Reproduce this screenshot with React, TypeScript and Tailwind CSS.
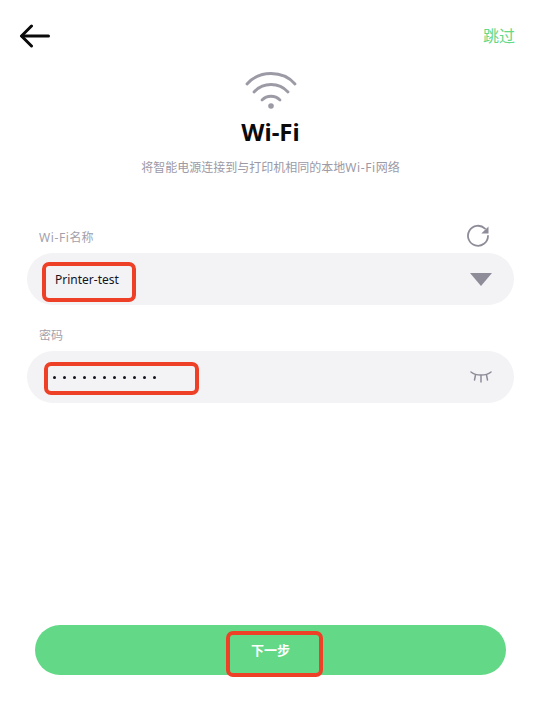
import React from 'react';

const FONT = "font-['Noto_Sans','Noto_Sans_CJK_SC',sans-serif]";

// red marker boxes drawn on top of the screenshot
const Mark = ({ className }: { className: string }) => (
    <div className={`absolute border-[4px] border-[#ee4027] rounded-[7px] ${className}`} />
);

function BackArrow() {
    return (
        <svg width="32" height="24" viewBox="0 0 32 24" fill="none" stroke="#0a0a0a" strokeWidth="3" strokeLinecap="round" strokeLinejoin="round">
            <path d="M29.5 12H3" />
            <path d="M12.5 2 2.5 12l10 10" />
        </svg>
    );
}

function WifiIcon() {
    return (
        <svg width="52" height="38" viewBox="0 0 52 38" fill="none" stroke="#9c9aa5" strokeWidth="2.8" strokeLinecap="round">
            <path d="M2 13C14-1 38-1 50 13" />
            <path d="M9 21C18 11 34 11 43 21" />
            <path d="M17 29C22 24 30 24 35 29" />
            <circle cx="26" cy="35" r="2.8" fill="#9c9aa5" stroke="none" />
        </svg>
    );
}

function RefreshIcon() {
    return (
        <svg width="24" height="24" viewBox="0 0 24 24" fill="none">
            <path d="M19 4.6A10 10 0 1 0 22 12" stroke="#8e8c98" strokeWidth="1.8" strokeLinecap="round" />
            <path d="M22.5 2.5V9.6h-7.2z" fill="#8e8c98" />
        </svg>
    );
}

function EyeClosed() {
    return (
        <svg width="22" height="14" viewBox="0 0 22 14" fill="none" stroke="#8e8c98" strokeWidth="1.5" strokeLinecap="round">
            <path d="M1 2C6 6 16 6 21 2" />
            <path d="M11 5.5V12" />
            <path d="M5.5 4.8 4.5 10" />
            <path d="M16.5 4.8 17.5 10" />
        </svg>
    );
}

export default function App() {
    return (
        <div className={`${FONT} w-[541px] h-[703px] bg-white flex flex-col overflow-hidden`}>
            <div className="flex items-start justify-between pl-[19px] pr-[26px] pt-[24px]">
                <BackArrow />
                <span className="mt-[1px] text-[16px] leading-[22px] text-[#63d886]">跳过</span>
            </div>

            <div className="flex flex-col items-center mt-[23px]">
                <WifiIcon />
                <h1 className="mt-[6px] text-[24px] leading-[34px] font-bold text-[#0a0a0a]">Wi-Fi</h1>
                <p className="mt-[10px] text-[12px] leading-[18px] text-[#9c9aa5]">
                    将智能电源连接到与打印机相同的本地<span className="tracking-[0.6px]">Wi-Fi</span>网络
                </p>
            </div>

            <div className="mt-[47px] px-[27px]">
                <div className="flex items-center justify-between h-[24px] pl-[12px] pr-[24px]">
                    <span className="mt-[4px] text-[12px] text-[#a3a1ab]">
                        <span className="tracking-[0.6px]">Wi-Fi</span>名称
                    </span>
                    <RefreshIcon />
                </div>
                <div className="relative mt-[5px] h-[52px] rounded-full bg-[#f3f3f5] flex items-center justify-between pl-[28px] pr-[22px]">
                    <span className="mt-[2px] text-[12px] text-[#14141f]">Printer-test</span>
                    <div className="w-0 h-0 border-x-[11px] border-x-transparent border-t-[13px] border-t-[#8e8c98]" />
                    <Mark className="left-[15px] top-[9px] w-[94px] h-[40px]" />
                </div>

                <div className="mt-[21px] h-[20px] pl-[12px] flex items-center">
                    <span className="text-[12px] text-[#a3a1ab]">密码</span>
                </div>
                <div className="relative mt-[5px] h-[52px] rounded-full bg-[#f3f3f5] flex items-center justify-between pl-[26px] pr-[22px]">
                    <div className="flex gap-[7px]">
                        {Array.from({ length: 11 }).map((_, i) => (
                            <span key={i} className="w-[3px] h-[3px] rounded-full bg-[#14141f]" />
                        ))}
                    </div>
                    <EyeClosed />
                    <Mark className="left-[17px] top-[11px] w-[155px] h-[33px]" />
                </div>
            </div>

            <div className="mt-auto mb-[28px] px-[35px]">
                <div className="relative h-[50px] rounded-full bg-[#63d886] flex items-center justify-center">
                    <span className="mt-[2px] text-[13px] font-bold text-white">下一步</span>
                    <Mark className="left-[191px] top-[6px] w-[97px] h-[46px]" />
                </div>
            </div>
        </div>
    );
}
